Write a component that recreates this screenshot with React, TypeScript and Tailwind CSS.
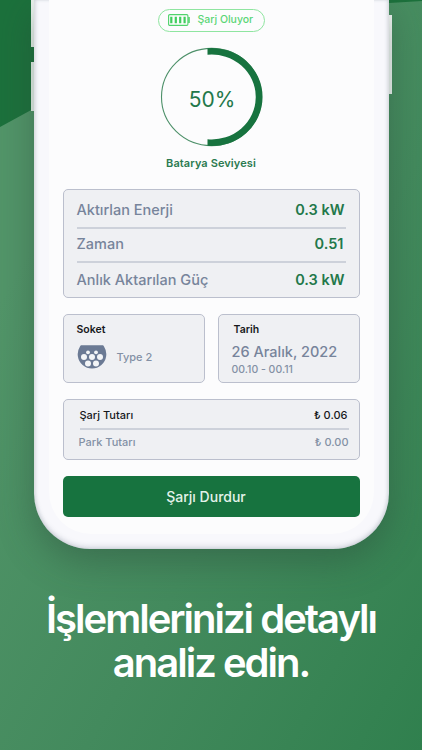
import React from 'react'

const stats = [
  { label: 'Aktırlan Enerji', value: '0.3 kW', row: 'h-[37px] pt-[2px]', pad: 'pr-[1px]' },
  { label: 'Zaman', value: '0.51', row: 'h-[34px] pb-[2px] border-t-2', pad: 'pr-[2px]' },
  { label: 'Anlık Aktarılan Güç', value: '0.3 kW', row: 'h-[36px] pb-[1px] border-t-2', pad: 'pr-[1px]' },
]

const card = 'rounded-[5px] border border-[#bbbfcd] bg-[#eff0f3]'

function BatteryIcon() {
  return (
    <svg className="h-3 w-[22px]" viewBox="0 0 22 12" fill="none">
      <rect x="0.6" y="0.6" width="19.3" height="10.8" rx="1.2" stroke="#4fd36b" strokeWidth="1.1" />
      <path d="M3.3 2.7v6.6M7.8 2.7v6.6M12.2 2.7v6.6M16.6 2.7v6.6" stroke="#3fce5d" strokeWidth="2.2" />
      <path d="M21 3v6" stroke="#4fd36b" strokeWidth="1.6" />
    </svg>
  )
}

function SocketIcon() {
  return (
    <svg className="h-[26px] w-[30px]" viewBox="0 0 30 26">
      <path d="M4.6 0.3h20.8c.8 0 1.2.4 1.6 1.1A14.3 14.3 0 1 1 3 1.4C3.400.7 3.800.3 4.600.3z" fill="#6b7a94" />
      <g fill="#f3f5f7">
        <circle cx="11" cy="7.3" r="1.9" />
        <circle cx="19" cy="7.300" r="1.9" />
        <circle cx="7" cy="12" r="3" />
        <circle cx="15" cy="12" r="3" />
        <circle cx="23" cy="12" r="3" />
        <circle cx="11" cy="18.400" r="3" />
        <circle cx="19" cy="18.400" r="3" />
      </g>
    </svg>
  )
}

function BatteryLevel() {
  return (
    <div className="relative mt-[15px] h-[100px] w-[103px]">
      <svg className="h-full w-full" viewBox="0 0 103 100" fill="none">
        <ellipse cx="51.5" cy="50" rx="50" ry="48.600" stroke="#4d9069" strokeWidth="1.1" />
        <path d="M47.500 1.200A50.500 49 0 1 1 47.500 98.800V92.300A44 42.500 0 1 0 47.500 7.700Z" fill="#17733f" />
      </svg>
      <span className="absolute inset-0 flex items-center justify-center pt-[5px] pl-[2px] text-[21px] leading-none text-[#23784a]">
        50%
      </span>
    </div>
  )
}

function Phone() {
  return (
    <div className="relative ml-[33.5px] h-[549px] w-[355px]">
      {/* Side buttons */}
      <div className="absolute top-0 -left-[2.5px] h-[47px] w-[3px] bg-[#eef5f1]" />
      <div className="absolute top-[62px] -left-[2.5px] h-[49px] w-[3px] bg-[#eef5f1]" />
      <div className="absolute top-[15px] -right-[3px] h-[79px] w-[3px] bg-[#f8fbfa]" />

      <div className="relative flex h-full flex-col items-center rounded-b-[56px] bg-[#f8f8fc] px-[15px] pb-[15px] shadow-[0_12px_36px_rgba(40,70,55,0.42),inset_0_-3px_5px_rgba(110,120,140,0.2),inset_2px_0_3px_rgba(130,150,150,0.16),inset_-2px_0_3px_rgba(130,150,150,0.16)]">
        <div className="flex h-full w-full flex-col items-center rounded-b-[42px] bg-[#fcfcfd] px-[14px] pt-[9px]">
          <div className="flex h-[22.5px] w-[107px] items-center rounded-full border border-[#8fe5a0] pl-[9px]">
            <BatteryIcon />
            <span className="ml-[8px] text-[10.5px] font-medium whitespace-nowrap text-[#5bd676]">Şarj Oluyor</span>
          </div>

          <BatteryLevel />
          <div className="mt-[8px] h-[16px] text-[11px] leading-4 font-semibold tracking-[0.1px] whitespace-nowrap text-[#2b7a50]">
            Batarya Seviyesi
          </div>

          <div className={`mt-[18.5px] h-[109px] w-[297px] shrink-0 px-[13px] ${card}`}>
            {stats.map((s) => (
              <div key={s.label} className={`flex items-center justify-between border-[#cdd1da] ${s.row}`}>
                <span className="text-[14.5px] font-medium whitespace-nowrap text-[#77849b]">{s.label}</span>
                <span className={`text-[14.5px] font-semibold whitespace-nowrap text-[#23784a] ${s.pad}`}>{s.value}</span>
              </div>
            ))}
          </div>

          <div className="mt-[15.500px] flex w-[297px] shrink-0 justify-between">
            <div className={`h-[69.5px] w-[142px] pt-[7px] pl-[13px] ${card}`}>
              <div className="text-[10.5px] leading-4 font-semibold text-[#17191c]">Soket</div>
              <div className="mt-[7px] flex items-center">
                <SocketIcon />
                <span className="ml-[10px] text-[11px] font-medium text-[#8390a5]">Type 2</span>
              </div>
            </div>
            <div className={`h-[69.5px] w-[142px] pt-[7px] pl-[13px] ${card}`}>
              <div className="pl-[2px] text-[10.5px] leading-4 font-semibold text-[#17191c]">Tarih</div>
              <div className="mt-[4px] text-[14.5px] leading-5 font-medium whitespace-nowrap text-[#77849b]">26 Aralık, 2022</div>
              <div className="text-[10.5px] leading-4 font-medium whitespace-nowrap text-[#8390a5]">00.10 - 00.11</div>
            </div>
          </div>

          <div className={`mt-[15.500px] h-[61.5px] w-[297px] shrink-0 pr-[10px] pl-[16px] ${card}`}>
            <div className="flex h-[30px] items-center justify-between border-b-2 border-[#cdd1da] pt-[4px] pr-[1px] text-[11px] font-medium text-[#17191c]">
              <span>Şarj Tutarı</span>
              <span>₺ 0.06</span>
            </div>
            <div className="-ml-[1px] flex h-[26px] items-center justify-between text-[11px] font-medium text-[#8390a5]">
              <span>Park Tutarı</span>
              <span>₺ 0.00</span>
            </div>
          </div>

          <button className="mt-[15.500px] h-[41px] w-[297px] shrink-0 rounded-[5px] bg-[#17733f] pr-[10px] text-[14px] font-medium text-[#e3f2e9]">
            Şarjı Durdur
          </button>
        </div>
      </div>
    </div>
  )
}

export default function App() {
  return (
    <div className="relative h-[750px] w-[422px] overflow-hidden bg-linear-to-br from-[#529569] from-20% via-[#438a5d] via-60% to-[#30804e] font-['Inter',sans-serif]">
      {/* Dark corner behind the phone */}
      <svg className="absolute inset-0 h-[130px] w-full" viewBox="0 0 422 130">
        <path d="M0 0H422V1L389 3L300 5L33 109L0 127Z" fill="#1c713c" />
      </svg>

      <Phone />

      <h1 className="relative mt-[48px] text-center text-[40px] leading-[44px] font-semibold tracking-[-2px] text-white">
        İşlemlerinizi detaylı
        <br />
        analiz edin.
      </h1>
    </div>
  )
}
